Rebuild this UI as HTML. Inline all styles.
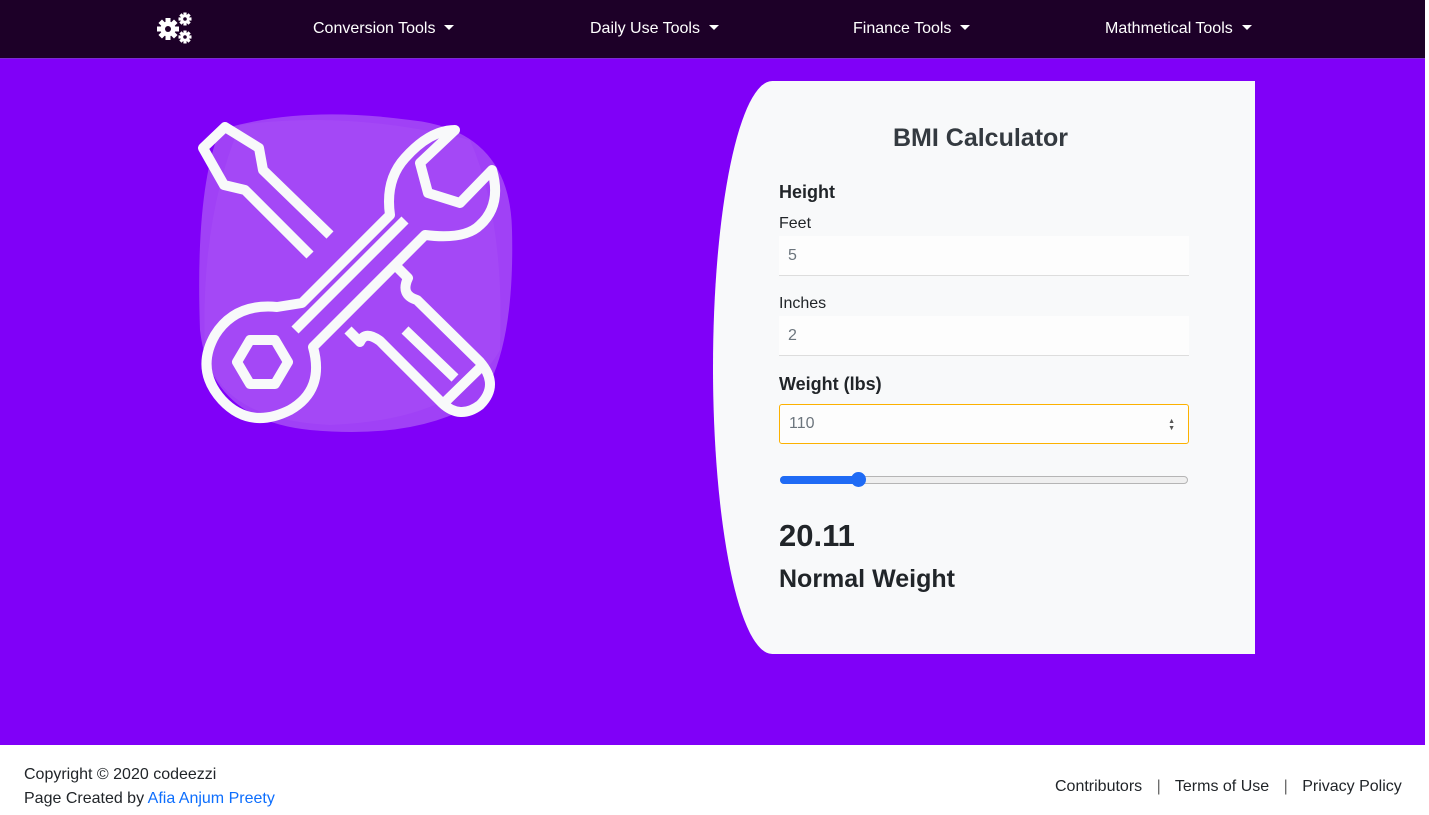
<!DOCTYPE html>
<html><head><style>
*{margin:0;padding:0;box-sizing:border-box}
body{width:1429px;height:815px;overflow:hidden;font-family:"Liberation Sans",Arial,sans-serif;background:#fff;position:relative}
.nav{position:absolute;left:0;top:0;width:1425px;height:59px;background:#1d0028;border-bottom:1px solid #7a2bd0}
.nav a{position:absolute;top:20px;color:#fff;font-size:16px;text-decoration:none;white-space:nowrap}
.nav a:after{content:"";display:inline-block;margin-left:9px;vertical-align:3px;border-top:5px solid #fff;border-left:5px solid transparent;border-right:5px solid transparent}
.main{position:absolute;left:0;top:59px;width:1425px;height:686px;background:#8000f8}
.card{position:absolute;left:713px;top:81px;width:542px;height:573px;background:#f8f9fa;border-radius:60px 0 0 60px/290px 0 0 290px}
.t{position:absolute;color:#212529;white-space:nowrap}
.b{font-weight:bold}
.inp{position:absolute;left:779px;width:410px;height:40px;background:#fdfdfd;border-bottom:1px solid #ddd;color:#6c757d;font-size:16px;padding:11px 9px}
.foot{position:absolute;left:0;top:745px;width:1429px;height:70px;font-size:16px;color:#212529}
</style></head><body>
<div class="nav">
<svg style="position:absolute;left:157px;top:12px" width="36" height="32" viewBox="0 0 36 32" fill="#fff">
<g transform="translate(11,17)"><circle r="7.5"/><g id="t"><rect x="-2.5" y="-11" width="5" height="22"/><rect x="-11" y="-2.5" width="22" height="5"/></g><use href="#t" transform="rotate(45)"/><circle r="3" fill="#1d0028"/></g>
<g transform="translate(28,7)"><circle r="4.5"/><rect x="-1.6" y="-6.5" width="3.2" height="13"/><rect x="-6.5" y="-1.6" width="13" height="3.2"/><g transform="rotate(45)"><rect x="-1.6" y="-6.5" width="3.2" height="13"/><rect x="-6.5" y="-1.6" width="13" height="3.2"/></g><circle r="1.8" fill="#1d0028"/></g>
<g transform="translate(28,25)"><circle r="4.5"/><rect x="-1.6" y="-6.5" width="3.2" height="13"/><rect x="-6.5" y="-1.6" width="13" height="3.2"/><g transform="rotate(45)"><rect x="-1.6" y="-6.5" width="3.2" height="13"/><rect x="-6.5" y="-1.6" width="13" height="3.2"/></g><circle r="1.8" fill="#1d0028"/></g>
</svg>
<a style="left:313px">Conversion Tools</a>
<a style="left:590px">Daily Use Tools</a>
<a style="left:853px">Finance Tools</a>
<a style="left:1105px">Mathmetical Tools</a>
</div>
<div class="main"></div>
<svg style="position:absolute;left:180px;top:100px" width="350" height="340" viewBox="0 0 350 340">
<path d="M40 30 Q120 5 230 20 Q330 30 332 130 Q335 250 300 300 Q240 340 130 330 Q30 320 20 230 Q15 90 40 30Z" fill="#a64cf6" opacity=".85"/>
<path d="M60 25 Q170 10 290 40 Q325 120 320 250 Q280 320 150 325 Q40 320 25 250 Q20 120 60 25Z" fill="#a64cf6" opacity=".6"/>
<g fill="none" stroke="#f8f9fa" stroke-width="10" stroke-linejoin="round">
<path d="M130 155 L65 90 L44 85 L23 48 L45 27 L79 48 L83 70 L150 135"/>
<path d="M122 203 L210 115 Q205 80 225 58 Q250 30 275 30 L240 63 L248 93 L280 103 L312 70 Q322 105 300 125 Q285 140 245 135 L133 247 Q145 290 110 310 Q70 330 42 300 Q15 270 35 235 Q55 203 97 207 Z"/>
<path d="M115 230 L225 120"/>
<path d="M70 240 L95 240 L108 262 L95 284 L70 284 L57 262 Z"/>
<path d="M218 168 L228 178 Q220 195 237 200 L300 262 Q320 285 300 305 Q280 320 262 303 L200 241 Q185 230 180 242 L168 230"/>
<path d="M225 230 L275 278 M262 305 L305 263"/>
</g>
</svg>
<div class="card"></div>
<div class="t" style="left:893px;top:124px;font-size:25px;color:#343a40;font-weight:bold">BMI Calculator</div>
<div class="t b" style="left:779px;top:182px;font-size:18px">Height</div>
<div class="t" style="left:779px;top:215px;font-size:16px">Feet</div>
<div class="inp" style="top:236px">5</div>
<div class="t" style="left:779px;top:295px;font-size:16px">Inches</div>
<div class="inp" style="top:316px">2</div>
<div class="t b" style="left:779px;top:374px;font-size:18px">Weight (lbs)</div>
<div class="inp" style="top:404px;border:1px solid #fcb100;border-radius:3px;background:#fdfdfd;padding-top:10px">110
<span style="position:absolute;right:13px;top:13px;font-size:7px;line-height:7px;color:#555">▲<br>▼</span></div>
<div style="position:absolute;left:780px;top:476px;width:408px;height:8px;border-radius:4px;background:#efefef;border:1px solid #b5b5b5"></div>
<div style="position:absolute;left:780px;top:476px;width:80px;height:8px;border-radius:4px;background:#1f6bf5"></div>
<div style="position:absolute;left:851px;top:472px;width:15px;height:15px;border-radius:50%;background:#1f6bf5"></div>
<div class="t b" style="left:779px;top:518px;font-size:31px">20.11</div>
<div class="t b" style="left:779px;top:565px;font-size:25px">Normal Weight</div>
<div class="foot">
<div class="t" style="left:24px;top:21px">Copyright © 2020 codeezzi</div>
<div class="t" style="left:24px;top:45px">Page Created by <span style="color:#0d6efd">Afia Anjum Preety</span></div>
<div class="t" style="left:1055px;top:33px">Contributors <span style="color:#666;margin:0 10px">|</span> Terms of Use <span style="color:#666;margin:0 10px">|</span> Privacy Policy</div>
</div>
</body></html>
